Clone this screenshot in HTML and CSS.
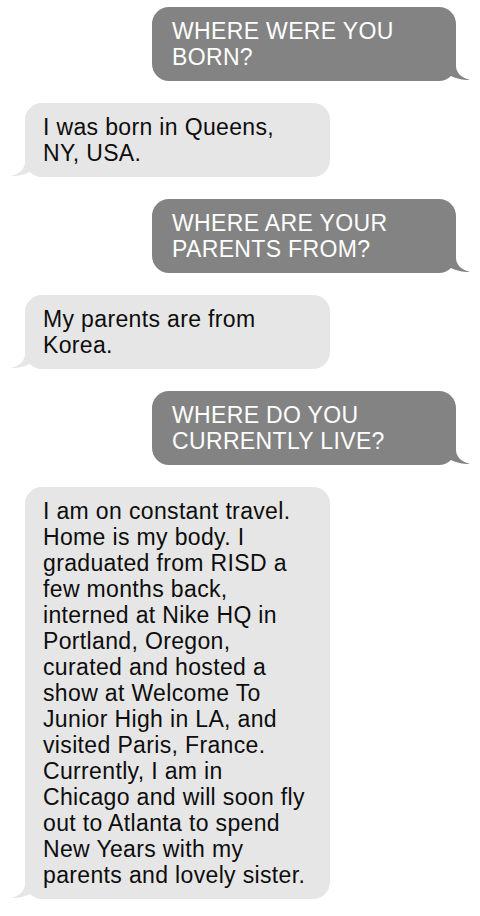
FILE: index.html
```html
<!DOCTYPE html>
<html>
	<head>
		<meta charset="utf-8" />
		<title>Questions</title>
		<link rel="stylesheet" href="styles.css">
	</head>
	<body>
		<div class="chat">
			<div class="bubble sent">
				WHERE WERE YOU<br>BORN?
				<svg class="tail" viewBox="0 0 32 22"><path d="M0,0 H16 V5 C16,12 22,17 30,19 C22,19 13,17 8,13 C5,15 2,16 0,16 Z"/></svg>
			</div>
			<div class="bubble got">
				I was born in Queens,<br>NY, USA.
				<svg class="tail" viewBox="0 0 32 22"><path d="M0,0 H16 V5 C16,12 22,17 30,19 C22,19 13,17 8,13 C5,15 2,16 0,16 Z"/></svg>
			</div>
			<div class="bubble sent">
				WHERE ARE YOUR<br>PARENTS FROM?
				<svg class="tail" viewBox="0 0 32 22"><path d="M0,0 H16 V5 C16,12 22,17 30,19 C22,19 13,17 8,13 C5,15 2,16 0,16 Z"/></svg>
			</div>
			<div class="bubble got">
				My parents are from<br>Korea.
				<svg class="tail" viewBox="0 0 32 22"><path d="M0,0 H16 V5 C16,12 22,17 30,19 C22,19 13,17 8,13 C5,15 2,16 0,16 Z"/></svg>
			</div>
			<div class="bubble sent">
				WHERE DO YOU<br>CURRENTLY LIVE?
				<svg class="tail" viewBox="0 0 32 22"><path d="M0,0 H16 V5 C16,12 22,17 30,19 C22,19 13,17 8,13 C5,15 2,16 0,16 Z"/></svg>
			</div>
			<div class="bubble got">
				I am on constant travel.<br>
				Home is my body. I<br>
				graduated from RISD a<br>
				few months back,<br>
				interned at Nike HQ in<br>
				Portland, Oregon,<br>
				curated and hosted a<br>
				show at Welcome To<br>
				Junior High in LA, and<br>
				visited Paris, France.<br>
				Currently, I am in<br>
				Chicago and will soon fly<br>
				out to Atlanta to spend<br>
				New Years with my<br>
				parents and lovely sister.
				<svg class="tail" viewBox="0 0 32 22"><path d="M0,0 H16 V5 C16,12 22,17 30,19 C22,19 13,17 8,13 C5,15 2,16 0,16 Z"/></svg>
			</div>
		</div>
	</body>
</html>
```
FILE: styles.css
```css
body{
	margin: 0;
	background: #fff;
	font-family: "Liberation Sans", Helvetica, Arial, sans-serif;
}
.chat{
	display: flex;
	flex-direction: column;
	gap: 22px;
	padding: 7px 0 20px;
}
.bubble{
	position: relative;
	font-size: 23px;
	line-height: 26px;
	letter-spacing: 0.35px;
	padding: 11px 18px;
	border-radius: 17px;
	white-space: nowrap;
}
.sent{
	align-self: flex-end;
	width: 266px;
	margin-right: 24px;
	padding-left: 20px;
	background: #838383;
	color: #fff;
}
.got{
	align-self: flex-start;
	width: 269px;
	margin-left: 25px;
	background: #e6e6e6;
	color: #0d0d0d;
}
/* the little hook under the corner */
.tail{
	position: absolute;
	bottom: -2px;
	width: 32px;
	height: 22px;
}
.sent .tail{
	right: -16px;
	fill: #838383;
}
.got .tail{
	left: -16px;
	fill: #e6e6e6;
	transform: scaleX(-1);
}
```
